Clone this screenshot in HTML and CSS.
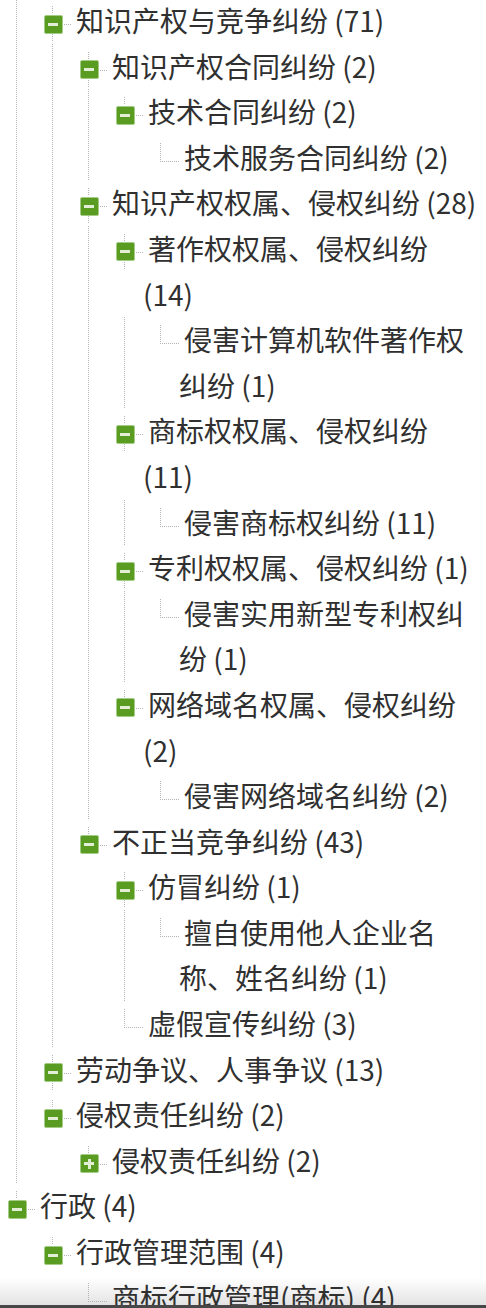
FILE: index.html
```html
<!DOCTYPE html>
<html lang="zh-CN">
<head>
<meta charset="utf-8">
<title>案由树</title>
<link rel="stylesheet" href="styles.css">
</head>
<body>
<div class="tree">
  <ul class="root">
    <li>
      <ul class="kids line">
        <li>
          <div class="node"><span class="sw open center"></span><span class="txt">知识产权与竞争纠纷 (71)</span></div>
          <ul class="kids line">
            <li>
              <div class="node"><span class="sw open center"></span><span class="txt">知识产权合同纠纷 (2)</span></div>
              <ul class="kids line">
                <li>
                  <div class="node"><span class="sw open bottom"></span><span class="txt">技术合同纠纷 (2)</span></div>
                  <ul class="kids">
                    <li><div class="node"><span class="sw leaf bottom"></span><span class="txt">技术服务合同纠纷 (2)</span></div></li>
                  </ul>
                </li>
              </ul>
            </li>
            <li>
              <div class="node"><span class="sw open center"></span><span class="txt">知识产权权属、侵权纠纷 (28)</span></div>
              <ul class="kids line">
                <li>
                  <div class="node"><span class="sw open center"></span><span class="txt">著作权权属、侵权纠纷 (14)</span></div>
                  <ul class="kids line">
                    <li><div class="node"><span class="sw leaf bottom"></span><span class="txt">侵害计算机软件著作权纠纷 (1)</span></div></li>
                  </ul>
                </li>
                <li>
                  <div class="node"><span class="sw open center"></span><span class="txt">商标权权属、侵权纠纷 (11)</span></div>
                  <ul class="kids line">
                    <li><div class="node"><span class="sw leaf bottom"></span><span class="txt">侵害商标权纠纷 (11)</span></div></li>
                  </ul>
                </li>
                <li>
                  <div class="node"><span class="sw open center"></span><span class="txt">专利权权属、侵权纠纷 (1)</span></div>
                  <ul class="kids line">
                    <li><div class="node"><span class="sw leaf bottom"></span><span class="txt">侵害实用新型专利权纠纷 (1)</span></div></li>
                  </ul>
                </li>
                <li>
                  <div class="node"><span class="sw open bottom"></span><span class="txt">网络域名权属、侵权纠纷 (2)</span></div>
                  <ul class="kids">
                    <li><div class="node"><span class="sw leaf bottom"></span><span class="txt">侵害网络域名纠纷 (2)</span></div></li>
                  </ul>
                </li>
              </ul>
            </li>
            <li>
              <div class="node"><span class="sw open bottom"></span><span class="txt">不正当竞争纠纷 (43)</span></div>
              <ul class="kids">
                <li>
                  <div class="node"><span class="sw open center"></span><span class="txt">仿冒纠纷 (1)</span></div>
                  <ul class="kids line">
                    <li><div class="node"><span class="sw leaf bottom"></span><span class="txt">擅自使用他人企业名称、姓名纠纷 (1)</span></div></li>
                  </ul>
                </li>
                <li><div class="node"><span class="sw leaf bottom"></span><span class="txt">虚假宣传纠纷 (3)</span></div></li>
              </ul>
            </li>
          </ul>
        </li>
        <li>
          <div class="node"><span class="sw open center"></span><span class="txt">劳动争议、人事争议 (13)</span></div>
        </li>
        <li>
          <div class="node"><span class="sw open bottom"></span><span class="txt">侵权责任纠纷 (2)</span></div>
          <ul class="kids">
            <li><div class="node"><span class="sw close bottom"></span><span class="txt">侵权责任纠纷 (2)</span></div></li>
          </ul>
        </li>
      </ul>
    </li>
    <li>
      <div class="node"><span class="sw open bottom"></span><span class="txt">行政 (4)</span></div>
      <ul class="kids">
        <li>
          <div class="node"><span class="sw open bottom"></span><span class="txt">行政管理范围 (4)</span></div>
          <ul class="kids">
            <li><div class="node"><span class="sw leaf bottom"></span><span class="txt">商标行政管理(商标) (4)</span></div></li>
          </ul>
        </li>
      </ul>
    </li>
  </ul>
</div>
<div class="bottom-edge"></div>
</body>
</html>
```

FILE: styles.css
```css
:root {
  --dot: #b3b3b3;
  --vdot: repeating-linear-gradient(to bottom, var(--dot) 0 1px, transparent 1px 2px);
  --hdot: repeating-linear-gradient(to right, var(--dot) 0 1px, transparent 1px 2px);
  --green: #5a9b22;
  --bar: #e2efd6;
}

html {
  background: linear-gradient(to bottom, #ffffff calc(100% - 30px), #e3e3e3 calc(100% - 3px)) fixed;
  min-height: 100%;
}

body {
  margin: 0;
  width: 486px;
  overflow: hidden;
  font-family: "Noto Sans CJK SC", "Noto Sans", sans-serif;
  font-size: 28px;
  color: #303030;
}

.tree {
  margin-top: -2px;
  padding: 0 6px 0 8px;
}

ul {
  list-style: none;
  margin: 0;
  padding: 0;
}

.kids {
  padding-left: 36px;
}

.kids.line {
  background: var(--vdot) 8px 0 / 1px 100% no-repeat;
}

.node {
  display: flex;
  align-items: flex-start;
  line-height: 45.6px;
}

.txt {
  flex: 1;
  min-width: 0;
  text-indent: 5px;
}

.sw {
  flex: 0 0 27px;
  height: 45.6px;
}

.sw::before {
  content: "";
  display: block;
  width: 19px;
  height: 19px;
  margin-top: 16.5px;
  margin-left: -0.5px;
  box-sizing: border-box;
  border: 1px solid #a3cc86;
  border-radius: 2px;
  background:
    linear-gradient(var(--bar), var(--bar)) center / 10px 3px no-repeat,
    var(--green);
}

.sw.close::before {
  background:
    linear-gradient(var(--bar), var(--bar)) center / 10px 3px no-repeat,
    linear-gradient(var(--bar), var(--bar)) center / 3px 10px no-repeat,
    var(--green);
}

.sw.leaf::before {
  content: none;
}

.sw.open.center,
.sw.close.center {
  background:
    var(--vdot) 8px 8px / 1px 8px no-repeat,
    var(--vdot) 8px 36px / 1px 8px no-repeat,
    var(--hdot) 20px 26px / 7px 1px no-repeat;
}

.sw.open.bottom,
.sw.close.bottom {
  background:
    var(--vdot) 8px 8px / 1px 8px no-repeat,
    var(--hdot) 20px 26px / 7px 1px no-repeat;
}

.sw.leaf.bottom {
  background:
    var(--vdot) 8px 8px / 1px 18px no-repeat,
    var(--hdot) 8px 26px / 19px 1px no-repeat;
}

.bottom-edge {
  position: fixed;
  left: 0;
  right: 0;
  bottom: 0;
  height: 3px;
  background: #474747;
}
```
